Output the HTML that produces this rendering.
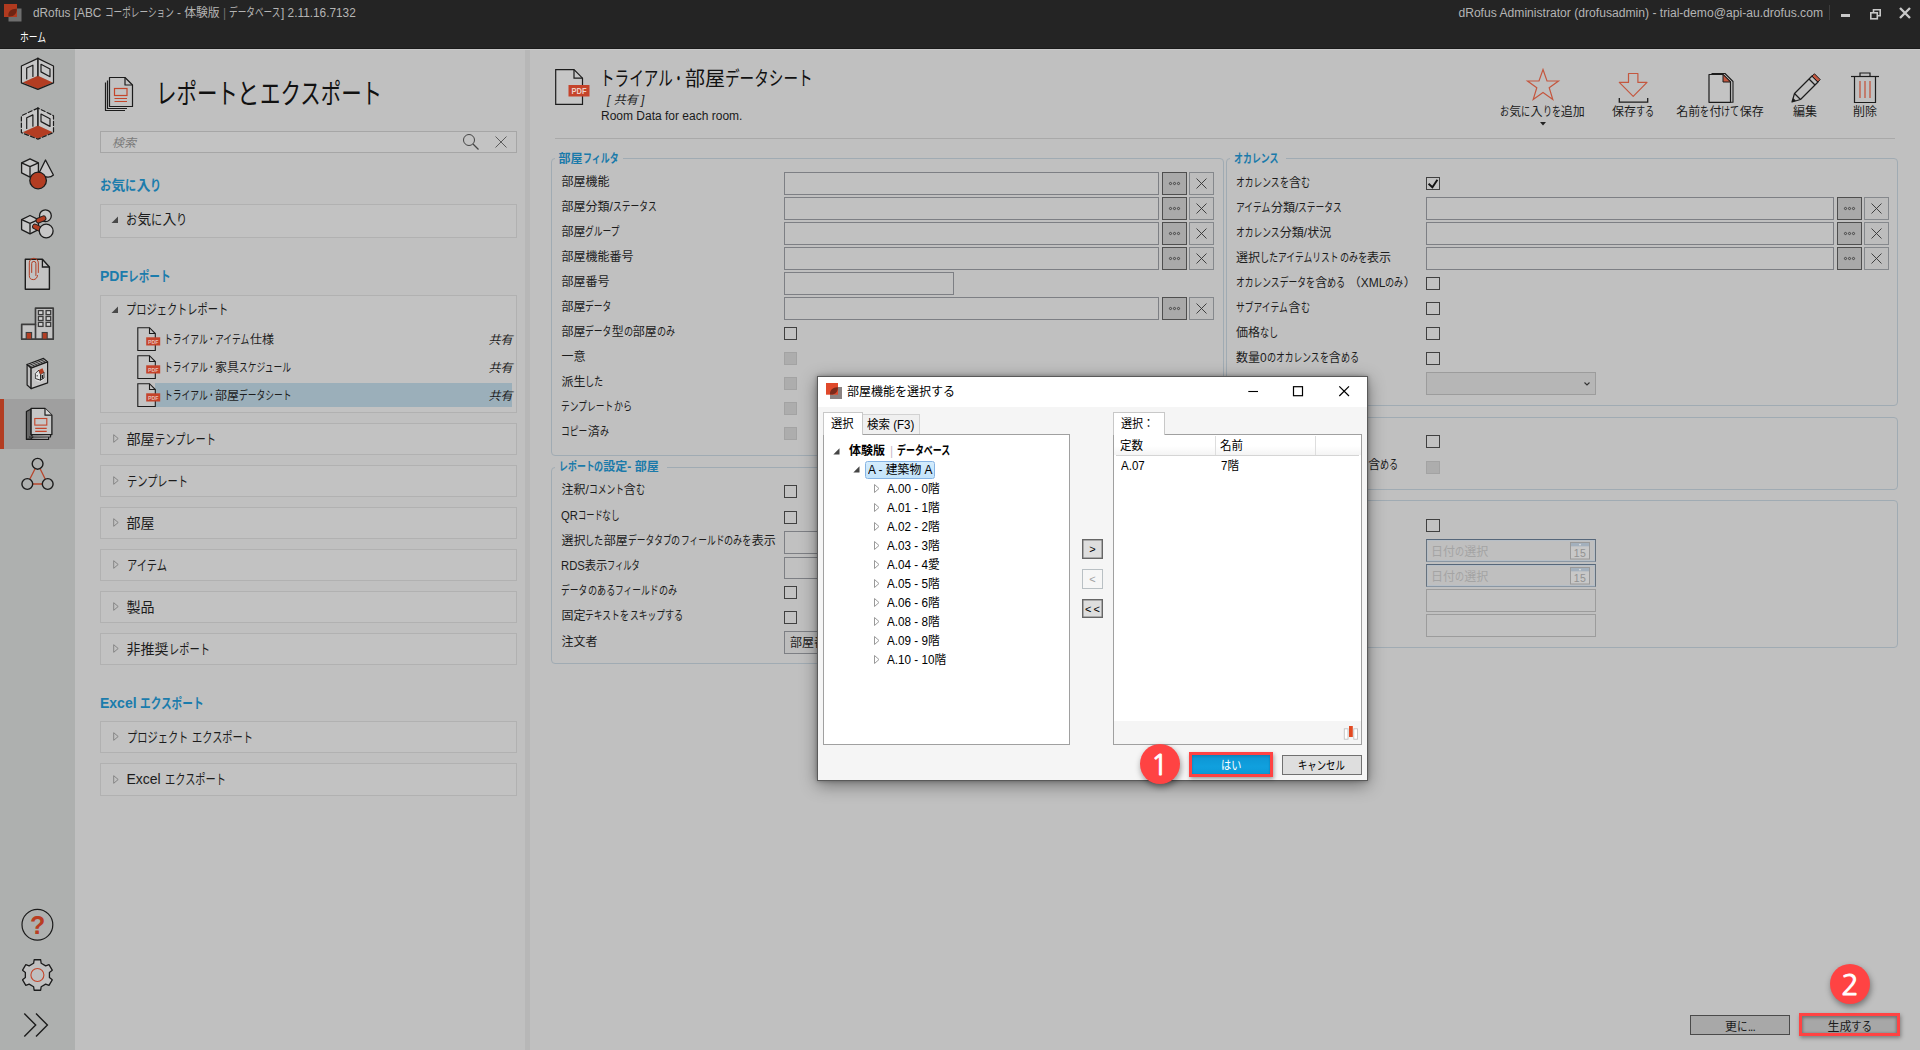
<!DOCTYPE html>
<html lang="ja"><head><meta charset="utf-8"><title>dRofus</title>
<style>
*{box-sizing:border-box;margin:0;padding:0}
html,body{width:1920px;height:1050px;overflow:hidden;background:#c0c0c0}
body{position:relative;font-family:"Liberation Sans","Noto Sans CJK JP",sans-serif;font-size:12px;color:#1a1a1a}
.t{position:absolute;white-space:nowrap}
.b{position:absolute}
.s{position:absolute;overflow:visible}
.k,.h{display:inline-block;transform-origin:0 50%;white-space:nowrap}
i,.i{font-style:italic}
</style></head>
<body>
<div class="b" style="left:0px;top:0px;width:1920px;height:48px;background:#242424"></div>
<div class="b" style="left:0px;top:48px;width:1920px;height:1px;background:#1a1a1a"></div>
<div class="b" style="left:0px;top:49px;width:1920px;height:1px;background:#c9c9c9"></div>
<svg class="s" style="left:4px;top:4px;" width="18" height="18" viewBox="0 0 18 18"><rect x="4.500" y="4.500" width="13" height="13" fill="#6e6e6e"/><rect x="0" y="0" width="13" height="13" fill="#b03a1f"/><path d="M4.500 12.500C3.500 7.500 7.500 4.500 12.800 4.800C13 9.500 10 13 4.500 12.500Z" fill="#6f2413"/></svg>
<div class="t" style="left:32.5px;top:3.5px;font-size:12px;line-height:18px;color:#b4b4b4;;transform:scaleX(0.985);transform-origin:left center">dRofus [ABC <span class="k" style="width:5.840em;transform:scaleX(0.730)">コーポレーション</span> - 体験版 <span style="color:#6e6e6e;font-weight:300">|</span> <span class="k" style="width:4.380em;transform:scaleX(0.730)">データベース</span>] 2.11.16.7132</div>
<div class="t" style="left:20px;top:28.5px;font-size:12px;line-height:18px;color:#ffffff;"><span class="k" style="width:2.190em;transform:scaleX(0.730)">ホーム</span></div>
<div class="t" style="right:97px;top:3.5px;font-size:12px;line-height:18px;color:#b4b4b4;;transform:scaleX(1.01);transform-origin:right center">dRofus Administrator (drofusadmin) - trial-demo@api-au.drofus.com</div>
<div class="b" style="left:1829px;top:5px;width:1px;height:15px;background:#3c3c3c"></div>
<svg class="s" style="left:1836px;top:4px;" width="80" height="20" viewBox="0 0 80 20"><rect x="5" y="10" width="9" height="3" fill="#c8c8c8"/><g fill="none" stroke="#c8c8c8" stroke-width="1.6"><rect x="34.800" y="8.800" width="6.500" height="6"/><path d="M37.500 8.500V5.800H44.200V11.800H41.500"/></g><path d="M64 4L74 14M74 4L64 14" stroke="#c8c8c8" stroke-width="2.4" fill="none"/></svg>
<div class="b" style="left:0px;top:49px;width:75px;height:1001px;background:#aeb0af"></div>
<div class="b" style="left:0px;top:49px;width:75px;height:1px;background:#b8bab9"></div>
<div class="b" style="left:0px;top:399px;width:75px;height:50px;background:#9f9f9f"></div>
<div class="b" style="left:0px;top:399px;width:4px;height:50px;background:#b33d22"></div>
<svg class="s" style="left:0;top:0" width="75" height="1050" viewBox="0 0 75 1050"><path d="M37.900 58.400L21.400 66V82.900L37.900 75.800Z M37.900 58.400L53.500 66V82.900L37.900 75.800Z" fill="#c7c7c7" stroke="none" transform="translate(0 0)"/><path d="M22.900 82.600L37.900 75.800L52.600 82.600L37.900 89.100Z" fill="#b33d22" transform="translate(0 0)"/><g stroke="#1c1c1c" stroke-width="1.2" fill="none" stroke-linejoin="round" stroke-linecap="round" transform="translate(0 0)"><path d="M37.900 58.400L21.400 66V82.900L37.900 89.400L53.500 82.900V66Z"/><path d="M37.900 58.400V75.800" stroke-width="1.600"/><path d="M26.700 78.800V68L32.900 65.200V76.500"/><path d="M41 64.300L50 69V76.700L41 71.900Z"/></g><path d="M37.900 58.400L21.400 66V82.900L37.900 75.800Z M37.900 58.400L53.500 66V82.900L37.900 75.800Z" fill="#c7c7c7" stroke="none" transform="translate(0 49.7)"/><path d="M22.900 82.600L37.900 75.800L52.600 82.600L37.900 89.100Z" fill="#b33d22" transform="translate(0 49.7)"/><g stroke="#1c1c1c" stroke-width="1.2" fill="none" stroke-linejoin="round" stroke-linecap="round" transform="translate(0 49.7)"><path d="M37.900 58.400L21.400 66V82.900L37.900 89.400L53.500 82.900V66Z" stroke-dasharray="4.200 2.200"/><path d="M37.900 58.400V75.800" stroke-width="1.600"/><path d="M26.700 78.800V68L32.900 65.200V76.500"/><path d="M41 64.300L50 69V76.700L41 71.900Z"/></g></svg>
<svg class="s" style="left:0;top:0" width="75" height="1050" viewBox="0 0 75 1050"><g transform="translate(20.5 157)"><path d="M9.500 1.800L1.100 5.900V15.900L9.500 20.100L17.900 15.900V5.900Z" fill="#c7c7c7" stroke="#1c1c1c" stroke-width="1.300" stroke-linejoin="round"/><path d="M1.100 5.900L9.500 9.700L17.900 5.900M9.500 9.700V20.100" fill="none" stroke="#1c1c1c" stroke-width="1.300" stroke-linejoin="round"/></g><path d="M45.500 160L39.300 172.500C42 177.500 50 178.500 53.400 175Z" fill="#c7c7c7" stroke="#1c1c1c" stroke-width="1.300" stroke-linejoin="round"/><circle cx="38.100" cy="180.500" r="8.300" fill="#b33d22" stroke="#1c1c1c" stroke-width="1.300"/></svg>
<svg class="s" style="left:0;top:0" width="75" height="1050" viewBox="0 0 75 1050"><circle cx="45.400" cy="215.700" r="5.900" fill="#c7c7c7" stroke="#1c1c1c" stroke-width="1.300"/><g transform="translate(20.5 213.7)"><path d="M9.500 1.800L1.100 5.900V15.900L9.500 20.100L17.900 15.900V5.900Z" fill="#c7c7c7" stroke="#1c1c1c" stroke-width="1.300" stroke-linejoin="round"/><path d="M1.100 5.900L9.500 9.700L17.900 5.900M9.500 9.700V20.100" fill="none" stroke="#1c1c1c" stroke-width="1.300" stroke-linejoin="round"/></g><path d="M38.500 220.500L43.500 218.300" stroke="#1c1c1c" stroke-width="5.800" stroke-linecap="round"/><path d="M38.500 220.500L43.500 218.300" stroke="#b33d22" stroke-width="4" stroke-linecap="round"/><path d="M35 226.500L41 229.500" stroke="#1c1c1c" stroke-width="5.800" stroke-linecap="round"/><path d="M35 226.500L41 229.500" stroke="#b33d22" stroke-width="4" stroke-linecap="round"/><circle cx="46.200" cy="231" r="6.900" fill="#c7c7c7" stroke="#1c1c1c" stroke-width="1.300"/></svg>
<svg class="s" style="left:0;top:0" width="75" height="1050" viewBox="0 0 75 1050"><path d="M25.300 259.300H42.400L49.400 267V289.200H25.300Z" fill="#c3c3c3" stroke="#1c1c1c" stroke-width="1.400" stroke-linejoin="round"/><path d="M42.400 259.300V267H49.400" fill="none" stroke="#1c1c1c" stroke-width="1.300"/><path d="M38.300 272.500V262.800A4.500 4.500 0 0 0 29.300 262.800V275.500A4.100 4.100 0 0 0 37.500 275.500" fill="none" stroke="#b33d22" stroke-width="1" stroke-linecap="round"/><path d="M37.500 275.500" fill="none"/><path d="M31.700 272.500V263.500A2.100 2.100 0 0 1 35.900 263.500V275.500" fill="none" stroke="#b33d22" stroke-width="1" stroke-linecap="round"/></svg>
<svg class="s" style="left:0;top:0" width="75" height="1050" viewBox="0 0 75 1050"><path d="M21.700 339.200V324.400H35.500V308.100H53.200V339.200Z" fill="#c3c3c3" stroke="#3c3c3c" stroke-width="1.700" stroke-linejoin="round"/><path d="M35.500 324.400V339.200" stroke="#3c3c3c" stroke-width="1.700"/><rect x="38.4" y="310.6" width="4.600" height="4" fill="#d2d2d2" stroke="#3c3c3c" stroke-width="1.300"/><rect x="38.4" y="316.5" width="4.600" height="4" fill="#d2d2d2" stroke="#3c3c3c" stroke-width="1.300"/><rect x="38.4" y="322.4" width="4.600" height="4" fill="#d2d2d2" stroke="#3c3c3c" stroke-width="1.300"/><rect x="46.1" y="310.6" width="4.600" height="4" fill="#d2d2d2" stroke="#3c3c3c" stroke-width="1.300"/><rect x="46.1" y="316.5" width="4.600" height="4" fill="#d2d2d2" stroke="#3c3c3c" stroke-width="1.300"/><rect x="46.1" y="322.4" width="4.600" height="4" fill="#d2d2d2" stroke="#3c3c3c" stroke-width="1.300"/><rect x="26.200" y="332.500" width="5.400" height="6.700" fill="#b33d22" stroke="#3c3c3c" stroke-width="1.100"/><rect x="42.200" y="332.500" width="5" height="6.700" fill="#b33d22" stroke="#3c3c3c" stroke-width="1.100"/></svg>
<svg class="s" style="left:0;top:0" width="75" height="1050" viewBox="0 0 75 1050"><g stroke="#1c1c1c" stroke-width="1.2" fill="none" stroke-linejoin="round" stroke-linecap="round"><path d="M27.100 364.500L43.500 358.400L47.600 361.900L31.100 368.100Z" fill="#d0d0d0"/><path d="M27.100 364.500V385L31.100 388.600V368.100Z" fill="#bcbcbc"/><path d="M31.100 368.100L47.600 361.900V382.900L31.100 388.600Z" fill="#c4c4c4"/><path d="M28.400 365.700L44.800 359.500M29.700 366.900L46.200 360.700" stroke-width="0.900"/></g><ellipse cx="39.500" cy="375.500" rx="5.800" ry="6.200" fill="#dedede"/><path d="M35.300 373.500L38.800 370L40.500 374.500V380.200L35.300 378.500Z" fill="#e4e4e4" stroke="#1c1c1c" stroke-width="0.900" stroke-linejoin="round"/><path d="M40.500 374.500L44 372V378L40.500 380.200Z" fill="#d4d4d4" stroke="#1c1c1c" stroke-width="0.900" stroke-linejoin="round"/><path d="M38.800 370L42.500 368.300L44 372L40.500 374.500Z" fill="#b33d22" stroke="none"/><rect x="41.600" y="375" width="1.400" height="3.600" fill="#1c1c1c"/><rect x="36.700" y="375.200" width="1" height="1.200" fill="#1c1c1c"/></svg>
<svg class="s" style="left:0;top:0" width="75" height="1050" viewBox="0 0 75 1050"><path d="M26.400 411.500L31.100 409V434.600L33 436.800L30.500 439.400H26.400Z" fill="#666" stroke="#1c1c1c" stroke-width="1.200" stroke-linejoin="round"/><path d="M27 439.400H48.600V437" fill="#c6c6c6" stroke="#1c1c1c" stroke-width="1.200" stroke-linejoin="round"/><path d="M29 437H50.500V434.600" fill="#c6c6c6" stroke="#1c1c1c" stroke-width="1.200" stroke-linejoin="round"/><path d="M31.100 408.400H45L51.900 415.200V434.600H31.100Z" fill="#c6c6c6" stroke="#1c1c1c" stroke-width="1.300" stroke-linejoin="round"/><path d="M45 408.400V415.200H51.900" fill="#d6d6d6" stroke="#1c1c1c" stroke-width="1.200" stroke-linejoin="round"/><g fill="none" stroke="#c4452a" stroke-width="1.100"><rect x="34.800" y="418.500" width="12" height="6.600"/><path d="M35.200 428.400H46.700M35.200 431.400H46.700"/></g></svg>
<svg class="s" style="left:0;top:0" width="75" height="1050" viewBox="0 0 75 1050"><path d="M37.600 463.800L27.300 484H47.700Z" fill="none" stroke="#b8462c" stroke-width="1.300"/><circle cx="37.6" cy="463.8" r="5.400" fill="#aeb0af" stroke="#1c1c1c" stroke-width="1.400"/><circle cx="27.3" cy="484" r="5.400" fill="#aeb0af" stroke="#1c1c1c" stroke-width="1.400"/><circle cx="47.7" cy="484" r="5.400" fill="#aeb0af" stroke="#1c1c1c" stroke-width="1.400"/></svg>
<svg class="s" style="left:0;top:0" width="75" height="1050" viewBox="0 0 75 1050"><circle cx="37.400" cy="924.700" r="15.400" fill="none" stroke="#1c1c1c" stroke-width="1.200"/><text x="37.600" y="934" text-anchor="middle" font-family="Liberation Sans, sans-serif" font-weight="bold" font-size="25" fill="#b93d22">?</text></svg>
<svg class="s" style="left:0;top:0" width="75" height="1050" viewBox="0 0 75 1050"><path d="M34.16 959.74L40.64 959.74L41.20 963.30L45.63 965.86L48.99 964.56L52.24 970.18L49.43 972.44L49.43 977.56L52.24 979.82L48.99 985.44L45.63 984.14L41.20 986.70L40.64 990.26L34.16 990.26L33.60 986.70L29.17 984.14L25.81 985.44L22.56 979.82L25.37 977.56L25.37 972.44L22.56 970.18L25.81 964.56L29.17 965.86L33.60 963.30Z" fill="#c0c0c0" stroke="#1c1c1c" stroke-width="1.300" stroke-linejoin="round"/><circle cx="37.400" cy="975" r="6.500" fill="none" stroke="#c4452a" stroke-width="1.100"/></svg>
<svg class="s" style="left:0;top:0" width="75" height="1050" viewBox="0 0 75 1050"><path d="M24.300 1013.600L35.700 1025L24.300 1036.600M36 1013.600L47.400 1025L36 1036.600" fill="none" stroke="#1c1c1c" stroke-width="1.400"/></svg>
<div class="b" style="left:525px;top:50px;width:5px;height:1000px;background:#b7b7b7"></div>
<svg class="s" style="left:104px;top:76px;" width="30" height="36" viewBox="0 0 30 36"><g fill="#c2c2c2" stroke="#1c1c1c" stroke-width="1.200" stroke-linejoin="round"><path d="M1.500 6.500V34.500H21"/><path d="M3.500 4.500V32.500H23" fill="none"/><path d="M5.500 1.500H21L28.500 9V30.500H5.500Z"/><path d="M21 1.500V9H28.500" fill="none"/></g><g fill="none" stroke="#c4462a" stroke-width="1.200"><rect x="10.500" y="12.500" width="12.500" height="7"/><path d="M10.500 22.500H23M10.500 25.500H23"/></g></svg>
<div class="t" style="left:155.5px;top:75px;font-size:28px;line-height:40px;color:#111;font-weight:400"><span class="k" style="width:2.920em;transform:scaleX(0.730)">レポート</span><span class="h" style="width:0.800em;transform:scaleX(0.800)">と</span><span class="k" style="width:4.380em;transform:scaleX(0.730)">エクスポート</span></div>
<div class="b" style="left:100px;top:131px;width:417px;height:22px;border:1px solid #a6a6a6;background:#c3c3c3"></div>
<div class="t" style="left:112px;top:133.5px;font-size:12px;line-height:18px;color:#7b7b7b;font-style:italic">検索</div>
<svg class="s" style="left:462px;top:133px;" width="18" height="18" viewBox="0 0 18 18"><circle cx="7" cy="7" r="5.500" fill="none" stroke="#454545" stroke-width="1"/><path d="M11 11L16.500 16.500" stroke="#454545" stroke-width="1.200"/></svg>
<svg class="s" style="left:495px;top:136px;" width="12" height="12" viewBox="0 0 12 12"><path d="M0.500 0.500L11.500 11.500M11.500 0.500L0.500 11.500" stroke="#505050" stroke-width="0.900"/></svg>
<div class="t" style="left:100px;top:175px;font-size:14px;line-height:21px;color:#1b7cac;font-weight:700"><span class="h" style="width:0.800em;transform:scaleX(0.800)">お</span>気<span class="h" style="width:0.800em;transform:scaleX(0.800)">に</span>入<span class="h" style="width:0.800em;transform:scaleX(0.800)">り</span></div>
<div class="b" style="left:100px;top:204px;width:417px;height:34px;border:1px solid #b1b1b1;background:#c2c2c2"></div>
<svg class="s" style="left:110.5px;top:216px;" width="8" height="8" viewBox="0 0 8 8"><path d="M7 0.500V7H0.500Z" fill="#484848"/></svg>
<div class="t" style="left:126px;top:208.8px;font-size:14px;line-height:21px;color:#1c1c1c;"><span class="h" style="width:0.800em;transform:scaleX(0.800)">お</span>気<span class="h" style="width:0.800em;transform:scaleX(0.800)">に</span>入<span class="h" style="width:0.800em;transform:scaleX(0.800)">り</span></div>
<div class="t" style="left:100px;top:265.5px;font-size:14px;line-height:21px;color:#1b7cac;font-weight:700"><b>PDF</b><span class="k" style="width:3.040em;transform:scaleX(0.760)">レポート</span></div>
<div class="b" style="left:100px;top:295px;width:417px;height:118px;border:1px solid #b1b1b1;background:#c2c2c2"></div>
<svg class="s" style="left:110.5px;top:306px;" width="8" height="8" viewBox="0 0 8 8"><path d="M7 0.500V7H0.500Z" fill="#484848"/></svg>
<div class="t" style="left:126px;top:298.5px;font-size:14px;line-height:21px;color:#1c1c1c;"><span class="k" style="width:7.300em;transform:scaleX(0.730)">プロジェクトレポート</span></div>
<div class="b" style="left:155px;top:383px;width:357px;height:24px;background:#9bafba"></div>
<svg class="s" style="left:137px;top:327px;" width="24" height="25" viewBox="0 0 24 25"><path d="M0.800 0.700H12.500L18.300 6.500V23.500H0.800Z" fill="#c4c4c4" stroke="#1c1c1c" stroke-width="1.100"/><path d="M12.500 0.700V6.500H18.300" fill="none" stroke="#1c1c1c" stroke-width="1.100"/><rect x="9.200" y="10.300" width="14" height="8.200" fill="#c5432a"/><text x="16.200" y="16.900" font-size="6.200" font-weight="bold" fill="#e6beb4" text-anchor="middle" font-family="Liberation Sans, sans-serif" textLength="10.500" lengthAdjust="spacingAndGlyphs">PDF</text></svg>
<div class="t" style="left:164px;top:330.5px;font-size:12px;line-height:18px;color:#1c1c1c;"><span class="k" style="width:3.650em;transform:scaleX(0.730)">トライアル</span><span class="k" style="width:0.500em;transform:scaleX(0.550);margin-left:0.020em;margin-right:0.080em">・</span><span class="k" style="width:2.920em;transform:scaleX(0.730)">アイテム</span>仕様</div>
<div class="t" style="right:1407.5px;top:330.5px;font-size:12px;line-height:18px;color:#1c1c1c;font-style:italic">共有</div>
<svg class="s" style="left:137px;top:355px;" width="24" height="25" viewBox="0 0 24 25"><path d="M0.800 0.700H12.500L18.300 6.500V23.500H0.800Z" fill="#c4c4c4" stroke="#1c1c1c" stroke-width="1.100"/><path d="M12.500 0.700V6.500H18.300" fill="none" stroke="#1c1c1c" stroke-width="1.100"/><rect x="9.200" y="10.300" width="14" height="8.200" fill="#c5432a"/><text x="16.200" y="16.900" font-size="6.200" font-weight="bold" fill="#e6beb4" text-anchor="middle" font-family="Liberation Sans, sans-serif" textLength="10.500" lengthAdjust="spacingAndGlyphs">PDF</text></svg>
<div class="t" style="left:164px;top:358.5px;font-size:12px;line-height:18px;color:#1c1c1c;"><span class="k" style="width:3.650em;transform:scaleX(0.730)">トライアル</span><span class="k" style="width:0.500em;transform:scaleX(0.550);margin-left:0.020em;margin-right:0.080em">・</span>家具<span class="k" style="width:4.380em;transform:scaleX(0.730)">スケジュール</span></div>
<div class="t" style="right:1407.5px;top:358.5px;font-size:12px;line-height:18px;color:#1c1c1c;font-style:italic">共有</div>
<svg class="s" style="left:137px;top:383px;" width="24" height="25" viewBox="0 0 24 25"><path d="M0.800 0.700H12.500L18.300 6.500V23.500H0.800Z" fill="#c4c4c4" stroke="#1c1c1c" stroke-width="1.100"/><path d="M12.500 0.700V6.500H18.300" fill="none" stroke="#1c1c1c" stroke-width="1.100"/><rect x="9.200" y="10.300" width="14" height="8.200" fill="#c5432a"/><text x="16.200" y="16.900" font-size="6.200" font-weight="bold" fill="#e6beb4" text-anchor="middle" font-family="Liberation Sans, sans-serif" textLength="10.500" lengthAdjust="spacingAndGlyphs">PDF</text></svg>
<div class="t" style="left:164px;top:386.5px;font-size:12px;line-height:18px;color:#1c1c1c;"><span class="k" style="width:3.650em;transform:scaleX(0.730)">トライアル</span><span class="k" style="width:0.500em;transform:scaleX(0.550);margin-left:0.020em;margin-right:0.080em">・</span>部屋<span class="k" style="width:4.380em;transform:scaleX(0.730)">データシート</span></div>
<div class="t" style="right:1407.5px;top:386.5px;font-size:12px;line-height:18px;color:#1c1c1c;font-style:italic">共有</div>
<div class="b" style="left:100px;top:423px;width:417px;height:32px;border:1px solid #b1b1b1;background:#c2c2c2"></div>
<svg class="s" style="left:113px;top:433.5px;" width="6" height="9" viewBox="0 0 6 9"><path d="M0.700 0.700L5.200 4.500L0.700 8.300Z" fill="none" stroke="#858585" stroke-width="1"/></svg>
<div class="t" style="left:126.5px;top:428.5px;font-size:14px;line-height:21px;color:#1c1c1c;">部屋<span class="k" style="width:4.380em;transform:scaleX(0.730)">テンプレート</span></div>
<div class="b" style="left:100px;top:465px;width:417px;height:32px;border:1px solid #b1b1b1;background:#c2c2c2"></div>
<svg class="s" style="left:113px;top:475.5px;" width="6" height="9" viewBox="0 0 6 9"><path d="M0.700 0.700L5.200 4.500L0.700 8.300Z" fill="none" stroke="#858585" stroke-width="1"/></svg>
<div class="t" style="left:126.5px;top:470.5px;font-size:14px;line-height:21px;color:#1c1c1c;"><span class="k" style="width:4.380em;transform:scaleX(0.730)">テンプレート</span></div>
<div class="b" style="left:100px;top:507px;width:417px;height:32px;border:1px solid #b1b1b1;background:#c2c2c2"></div>
<svg class="s" style="left:113px;top:517.5px;" width="6" height="9" viewBox="0 0 6 9"><path d="M0.700 0.700L5.200 4.500L0.700 8.300Z" fill="none" stroke="#858585" stroke-width="1"/></svg>
<div class="t" style="left:126.5px;top:512.5px;font-size:14px;line-height:21px;color:#1c1c1c;">部屋</div>
<div class="b" style="left:100px;top:549px;width:417px;height:32px;border:1px solid #b1b1b1;background:#c2c2c2"></div>
<svg class="s" style="left:113px;top:559.5px;" width="6" height="9" viewBox="0 0 6 9"><path d="M0.700 0.700L5.200 4.500L0.700 8.300Z" fill="none" stroke="#858585" stroke-width="1"/></svg>
<div class="t" style="left:126.5px;top:554.5px;font-size:14px;line-height:21px;color:#1c1c1c;"><span class="k" style="width:2.920em;transform:scaleX(0.730)">アイテム</span></div>
<div class="b" style="left:100px;top:591px;width:417px;height:32px;border:1px solid #b1b1b1;background:#c2c2c2"></div>
<svg class="s" style="left:113px;top:601.5px;" width="6" height="9" viewBox="0 0 6 9"><path d="M0.700 0.700L5.200 4.500L0.700 8.300Z" fill="none" stroke="#858585" stroke-width="1"/></svg>
<div class="t" style="left:126.5px;top:596.5px;font-size:14px;line-height:21px;color:#1c1c1c;">製品</div>
<div class="b" style="left:100px;top:633px;width:417px;height:32px;border:1px solid #b1b1b1;background:#c2c2c2"></div>
<svg class="s" style="left:113px;top:643.5px;" width="6" height="9" viewBox="0 0 6 9"><path d="M0.700 0.700L5.200 4.500L0.700 8.300Z" fill="none" stroke="#858585" stroke-width="1"/></svg>
<div class="t" style="left:126.5px;top:638.5px;font-size:14px;line-height:21px;color:#1c1c1c;">非推奨<span class="k" style="width:2.920em;transform:scaleX(0.730)">レポート</span></div>
<div class="t" style="left:100px;top:693px;font-size:14px;line-height:21px;color:#1b7cac;font-weight:700"><b>Excel</b> <span class="k" style="width:4.560em;transform:scaleX(0.760)">エクスポート</span></div>
<div class="b" style="left:100px;top:721px;width:417px;height:32px;border:1px solid #b1b1b1;background:#c2c2c2"></div>
<svg class="s" style="left:113px;top:732px;" width="6" height="9" viewBox="0 0 6 9"><path d="M0.700 0.700L5.200 4.500L0.700 8.300Z" fill="none" stroke="#858585" stroke-width="1"/></svg>
<div class="t" style="left:126.5px;top:726.5px;font-size:14px;line-height:21px;color:#1c1c1c;"><span class="k" style="width:4.380em;transform:scaleX(0.730)">プロジェクト</span> <span class="k" style="width:4.380em;transform:scaleX(0.730)">エクスポート</span></div>
<div class="b" style="left:100px;top:763px;width:417px;height:33px;border:1px solid #b1b1b1;background:#c2c2c2"></div>
<svg class="s" style="left:113px;top:774.5px;" width="6" height="9" viewBox="0 0 6 9"><path d="M0.700 0.700L5.200 4.500L0.700 8.300Z" fill="none" stroke="#858585" stroke-width="1"/></svg>
<div class="t" style="left:126.5px;top:769px;font-size:14px;line-height:21px;color:#1c1c1c;">Excel <span class="k" style="width:4.380em;transform:scaleX(0.730)">エクスポート</span></div>
<svg class="s" style="left:554px;top:68px;" width="38" height="38" viewBox="0 0 38 38"><path d="M1.700 1.700H20L28.500 10.200V36.300H1.700Z" fill="#c6c6c6" stroke="#1c1c1c" stroke-width="1.200"/><path d="M20 1.700V10.200H28.500" fill="none" stroke="#1c1c1c" stroke-width="1.200"/><rect x="14.500" y="17" width="21" height="11.500" fill="#c5432a"/><text x="25" y="26.300" font-size="9" font-weight="bold" fill="#ecd0c8" text-anchor="middle" font-family="Liberation Sans, sans-serif" textLength="15" lengthAdjust="spacingAndGlyphs">PDF</text></svg>
<div class="t" style="left:600px;top:64.5px;font-size:20px;line-height:28px;color:#111;"><span class="k" style="width:3.650em;transform:scaleX(0.730)">トライアル</span><span class="k" style="width:0.500em;transform:scaleX(0.550);margin-left:0.020em;margin-right:0.080em">・</span>部屋<span class="k" style="width:4.380em;transform:scaleX(0.730)">データシート</span></div>
<div class="t" style="left:607px;top:90.5px;font-size:12px;line-height:18px;color:#222;font-style:italic">[ 共有 ]</div>
<div class="t" style="left:601px;top:106.5px;font-size:12px;line-height:18px;color:#1a1a1a;">Room Data for each room.</div>
<div class="b" style="left:555px;top:138px;width:1340px;height:1px;background:#a9a9a9"></div>
<svg class="s" style="left:1526px;top:68px;" width="34" height="34" viewBox="0 0 34 34"><path d="M17 1.500L21 13H32.500L23.200 19.800L26.800 31.500L17 24.500L7.200 31.500L10.800 19.800L1.500 13H13Z" fill="none" stroke="#c4573f" stroke-width="1.200" stroke-linejoin="miter"/></svg>
<div class="t" style="left:1342.5px;width:400px;text-align:center;top:103px;font-size:12px;line-height:18px;color:#1c1c1c;"><span class="h" style="width:0.760em;transform:scaleX(0.760)">お</span>気<span class="h" style="width:0.760em;transform:scaleX(0.760)">に</span>入<span class="h" style="width:1.520em;transform:scaleX(0.760)">りを</span>追加</div>
<svg class="s" style="left:1540px;top:122px;" width="6" height="4" viewBox="0 0 6 4"><path d="M0 0H6L3 3.500Z" fill="#222"/></svg>
<svg class="s" style="left:1618px;top:72px;" width="31" height="32" viewBox="0 0 31 32"><path d="M10.500 1.500H19.900V10.400H29L15.200 24.300L1.300 10.400H10.500Z" fill="none" stroke="#c4573f" stroke-width="1.200" stroke-linejoin="round"/><path d="M1.300 26V30.100H29.700V26" fill="none" stroke="#1c1c1c" stroke-width="1.300"/></svg>
<div class="t" style="left:1433px;width:400px;text-align:center;top:103px;font-size:12px;line-height:18px;color:#1c1c1c;">保存<span class="h" style="width:1.520em;transform:scaleX(0.760)">する</span></div>
<svg class="s" style="left:1707px;top:72px;" width="28" height="32" viewBox="0 0 28 32"><path d="M4.500 1.500H18L26 9.500V30.300H23.500" fill="#c3c3c3" stroke="#1c1c1c" stroke-width="1.100" stroke-linejoin="round"/><path d="M2 2.500H16L23.500 10V30.300H2Z" fill="#c3c3c3" stroke="#1c1c1c" stroke-width="1.200" stroke-linejoin="round"/><path d="M16 2.500L23.500 10H16Z" fill="#c4573f" stroke="#1c1c1c" stroke-width="1"/></svg>
<div class="t" style="left:1520px;width:400px;text-align:center;top:103px;font-size:12px;line-height:18px;color:#1c1c1c;">名前<span class="h" style="width:0.760em;transform:scaleX(0.760)">を</span>付<span class="h" style="width:1.520em;transform:scaleX(0.760)">けて</span>保存</div>
<svg class="s" style="left:1790px;top:72px;" width="32" height="32" viewBox="0 0 32 32"><g fill="none" stroke="#1c1c1c" stroke-width="1.200" stroke-linejoin="round"><path d="M2 30L4.500 21.500L22 4L28 10L10.500 27.500Z"/><path d="M4.500 21.500L10.500 27.500"/><path d="M19 7L25 13"/></g><path d="M22 4L24.500 1.800L30.200 7.500L28 10Z" fill="#c4573f" stroke="#1c1c1c" stroke-width="1"/><path d="M2 30L3.200 26L6 28.800Z" fill="#1c1c1c"/></svg>
<div class="t" style="left:1605px;width:400px;text-align:center;top:103px;font-size:12px;line-height:18px;color:#1c1c1c;">編集</div>
<svg class="s" style="left:1850px;top:71px;" width="30" height="33" viewBox="0 0 30 33"><g fill="none" stroke="#1c1c1c" stroke-width="1.200"><path d="M1 5.500H29"/><path d="M10 5.500V2H20V5.500"/><path d="M4.500 5.500V31.500H25.500V5.500"/></g><path d="M10 10V27M15 10V27M20 10V27" stroke="#c4573f" stroke-width="1.300"/></svg>
<div class="t" style="left:1665px;width:400px;text-align:center;top:103px;font-size:12px;line-height:18px;color:#1c1c1c;">削除</div>
<div class="b" style="left:551px;top:158px;width:673px;height:298px;border:1px solid #a0abb3;border-radius:4px"></div>
<div class="b" style="left:555px;top:156px;width:68px;height:5px;background:#c0c0c0"></div>
<div class="t" style="left:558.5px;top:149.5px;font-size:12px;line-height:18px;color:#1a7aaa;font-weight:700">部屋<span class="k" style="width:2.980em;transform:scaleX(0.745)">フィルタ</span></div>
<div class="t" style="left:561.4px;top:173.4px;font-size:12px;line-height:18px;color:#1c1c1c;">部屋機能</div>
<div class="t" style="left:561.4px;top:198.4px;font-size:12px;line-height:18px;color:#1c1c1c;">部屋分類/<span class="k" style="width:3.650em;transform:scaleX(0.730)">ステータス</span></div>
<div class="t" style="left:561.4px;top:223.4px;font-size:12px;line-height:18px;color:#1c1c1c;">部屋<span class="k" style="width:2.920em;transform:scaleX(0.730)">グループ</span></div>
<div class="t" style="left:561.4px;top:248.4px;font-size:12px;line-height:18px;color:#1c1c1c;">部屋機能番号</div>
<div class="t" style="left:561.4px;top:273.4px;font-size:12px;line-height:18px;color:#1c1c1c;">部屋番号</div>
<div class="t" style="left:561.4px;top:298.4px;font-size:12px;line-height:18px;color:#1c1c1c;">部屋<span class="k" style="width:2.190em;transform:scaleX(0.730)">データ</span></div>
<div class="t" style="left:561.4px;top:323.4px;font-size:12px;line-height:18px;color:#1c1c1c;">部屋<span class="k" style="width:2.190em;transform:scaleX(0.730)">データ</span>型<span class="h" style="width:0.760em;transform:scaleX(0.760)">の</span>部屋<span class="h" style="width:1.520em;transform:scaleX(0.760)">のみ</span></div>
<div class="t" style="left:561.4px;top:348.4px;font-size:12px;line-height:18px;color:#1c1c1c;">一意</div>
<div class="t" style="left:561.4px;top:373.4px;font-size:12px;line-height:18px;color:#1c1c1c;">派生<span class="h" style="width:1.520em;transform:scaleX(0.760)">した</span></div>
<div class="t" style="left:561.4px;top:398.4px;font-size:12px;line-height:18px;color:#1c1c1c;"><span class="k" style="width:4.380em;transform:scaleX(0.730)">テンプレート</span><span class="h" style="width:1.520em;transform:scaleX(0.760)">から</span></div>
<div class="t" style="left:561.4px;top:423.4px;font-size:12px;line-height:18px;color:#1c1c1c;"><span class="k" style="width:2.190em;transform:scaleX(0.730)">コピー</span>済<span class="h" style="width:0.760em;transform:scaleX(0.760)">み</span></div>
<div class="b" style="left:784px;top:172px;width:375px;height:23px;border:1px solid #7d7f84;background:#c1c1c1;"></div>
<div class="b" style="left:1162px;top:172px;width:25px;height:23px;border:1px solid #4e4e4e;background:#a9a9a9"></div>
<svg class="s" style="left:1169px;top:182px;" width="11" height="3" viewBox="0 0 11 3"><g fill="none" stroke="#333" stroke-width="0.800"><circle cx="1.500" cy="1.500" r="1.100"/><circle cx="5.500" cy="1.500" r="1.100"/><circle cx="9.500" cy="1.500" r="1.100"/></g></svg>
<div class="b" style="left:1189px;top:172px;width:25px;height:23px;border:1px solid #85888c;background:#bdbdbd"></div>
<svg class="s" style="left:1196px;top:178px;" width="11" height="11" viewBox="0 0 11 11"><path d="M0.500 0.500L10.500 10.500M10.500 0.500L0.500 10.500" stroke="#333" stroke-width="0.900"/></svg>
<div class="b" style="left:784px;top:197px;width:375px;height:23px;border:1px solid #7d7f84;background:#c1c1c1;"></div>
<div class="b" style="left:1162px;top:197px;width:25px;height:23px;border:1px solid #4e4e4e;background:#a9a9a9"></div>
<svg class="s" style="left:1169px;top:207px;" width="11" height="3" viewBox="0 0 11 3"><g fill="none" stroke="#333" stroke-width="0.800"><circle cx="1.500" cy="1.500" r="1.100"/><circle cx="5.500" cy="1.500" r="1.100"/><circle cx="9.500" cy="1.500" r="1.100"/></g></svg>
<div class="b" style="left:1189px;top:197px;width:25px;height:23px;border:1px solid #85888c;background:#bdbdbd"></div>
<svg class="s" style="left:1196px;top:203px;" width="11" height="11" viewBox="0 0 11 11"><path d="M0.500 0.500L10.500 10.500M10.500 0.500L0.500 10.500" stroke="#333" stroke-width="0.900"/></svg>
<div class="b" style="left:784px;top:222px;width:375px;height:23px;border:1px solid #7d7f84;background:#c1c1c1;"></div>
<div class="b" style="left:1162px;top:222px;width:25px;height:23px;border:1px solid #4e4e4e;background:#a9a9a9"></div>
<svg class="s" style="left:1169px;top:232px;" width="11" height="3" viewBox="0 0 11 3"><g fill="none" stroke="#333" stroke-width="0.800"><circle cx="1.500" cy="1.500" r="1.100"/><circle cx="5.500" cy="1.500" r="1.100"/><circle cx="9.500" cy="1.500" r="1.100"/></g></svg>
<div class="b" style="left:1189px;top:222px;width:25px;height:23px;border:1px solid #85888c;background:#bdbdbd"></div>
<svg class="s" style="left:1196px;top:228px;" width="11" height="11" viewBox="0 0 11 11"><path d="M0.500 0.500L10.500 10.500M10.500 0.500L0.500 10.500" stroke="#333" stroke-width="0.900"/></svg>
<div class="b" style="left:784px;top:247px;width:375px;height:23px;border:1px solid #7d7f84;background:#c1c1c1;"></div>
<div class="b" style="left:1162px;top:247px;width:25px;height:23px;border:1px solid #4e4e4e;background:#a9a9a9"></div>
<svg class="s" style="left:1169px;top:257px;" width="11" height="3" viewBox="0 0 11 3"><g fill="none" stroke="#333" stroke-width="0.800"><circle cx="1.500" cy="1.500" r="1.100"/><circle cx="5.500" cy="1.500" r="1.100"/><circle cx="9.500" cy="1.500" r="1.100"/></g></svg>
<div class="b" style="left:1189px;top:247px;width:25px;height:23px;border:1px solid #85888c;background:#bdbdbd"></div>
<svg class="s" style="left:1196px;top:253px;" width="11" height="11" viewBox="0 0 11 11"><path d="M0.500 0.500L10.500 10.500M10.500 0.500L0.500 10.500" stroke="#333" stroke-width="0.900"/></svg>
<div class="b" style="left:784px;top:297px;width:375px;height:23px;border:1px solid #7d7f84;background:#c1c1c1;"></div>
<div class="b" style="left:1162px;top:297px;width:25px;height:23px;border:1px solid #4e4e4e;background:#a9a9a9"></div>
<svg class="s" style="left:1169px;top:307px;" width="11" height="3" viewBox="0 0 11 3"><g fill="none" stroke="#333" stroke-width="0.800"><circle cx="1.500" cy="1.500" r="1.100"/><circle cx="5.500" cy="1.500" r="1.100"/><circle cx="9.500" cy="1.500" r="1.100"/></g></svg>
<div class="b" style="left:1189px;top:297px;width:25px;height:23px;border:1px solid #85888c;background:#bdbdbd"></div>
<svg class="s" style="left:1196px;top:303px;" width="11" height="11" viewBox="0 0 11 11"><path d="M0.500 0.500L10.500 10.500M10.500 0.500L0.500 10.500" stroke="#333" stroke-width="0.900"/></svg>
<div class="b" style="left:784px;top:272px;width:170px;height:23px;border:1px solid #7d7f84;background:#c1c1c1;"></div>
<div class="b" style="left:784px;top:327px;width:13px;height:13px;border:1px solid #404040;background:#c2c2c2"></div>
<div class="b" style="left:784px;top:352px;width:13px;height:13px;border:1px solid #a3a3a3;background:#adadad"></div>
<div class="b" style="left:784px;top:377px;width:13px;height:13px;border:1px solid #a3a3a3;background:#adadad"></div>
<div class="b" style="left:784px;top:402px;width:13px;height:13px;border:1px solid #a3a3a3;background:#adadad"></div>
<div class="b" style="left:784px;top:427px;width:13px;height:13px;border:1px solid #a3a3a3;background:#adadad"></div>
<div class="b" style="left:551px;top:466.5px;width:673px;height:197.5px;border:1px solid #a0abb3;border-radius:4px"></div>
<div class="b" style="left:555px;top:464.5px;width:112px;height:5px;background:#c0c0c0"></div>
<div class="t" style="left:558.5px;top:458px;font-size:12px;line-height:18px;color:#1a7aaa;font-weight:700"><span class="k" style="width:2.980em;transform:scaleX(0.745)">レポート</span><span class="h" style="width:0.760em;transform:scaleX(0.760)">の</span>設定- 部屋</div>
<div class="t" style="left:561.4px;top:481.3px;font-size:12px;line-height:18px;color:#1c1c1c;">注釈/<span class="k" style="width:2.920em;transform:scaleX(0.730)">コメント</span>含<span class="h" style="width:0.760em;transform:scaleX(0.760)">む</span></div>
<div class="t" style="left:561.4px;top:506.5px;font-size:12px;line-height:18px;color:#1c1c1c;;transform:scaleX(0.94);transform-origin:left center">QR<span class="k" style="width:2.190em;transform:scaleX(0.730)">コード</span><span class="h" style="width:1.520em;transform:scaleX(0.760)">なし</span></div>
<div class="t" style="left:561.4px;top:531.7px;font-size:12px;line-height:18px;color:#1c1c1c;">選択<span class="h" style="width:1.520em;transform:scaleX(0.760)">した</span>部屋<span class="k" style="width:3.650em;transform:scaleX(0.730)">データタブ</span><span class="h" style="width:0.760em;transform:scaleX(0.760)">の</span><span class="k" style="width:3.650em;transform:scaleX(0.730)">フィールド</span><span class="h" style="width:2.280em;transform:scaleX(0.760)">のみを</span>表示</div>
<div class="t" style="left:561.4px;top:556.9px;font-size:12px;line-height:18px;color:#1c1c1c;;transform:scaleX(0.94);transform-origin:left center">RDS表示<span class="k" style="width:2.920em;transform:scaleX(0.730)">フィルタ</span></div>
<div class="t" style="left:561.4px;top:582.1px;font-size:12px;line-height:18px;color:#1c1c1c;"><span class="k" style="width:2.190em;transform:scaleX(0.730)">データ</span><span class="h" style="width:2.280em;transform:scaleX(0.760)">のある</span><span class="k" style="width:3.650em;transform:scaleX(0.730)">フィールド</span><span class="h" style="width:1.520em;transform:scaleX(0.760)">のみ</span></div>
<div class="t" style="left:561.4px;top:607.3px;font-size:12px;line-height:18px;color:#1c1c1c;">固定<span class="k" style="width:2.920em;transform:scaleX(0.730)">テキスト</span><span class="h" style="width:0.760em;transform:scaleX(0.760)">を</span><span class="k" style="width:2.920em;transform:scaleX(0.730)">スキップ</span><span class="h" style="width:1.520em;transform:scaleX(0.760)">する</span></div>
<div class="t" style="left:561.4px;top:632.5px;font-size:12px;line-height:18px;color:#1c1c1c;">注文者</div>
<div class="b" style="left:784px;top:485px;width:13px;height:13px;border:1px solid #404040;background:#c2c2c2"></div>
<div class="b" style="left:784px;top:511px;width:13px;height:13px;border:1px solid #404040;background:#c2c2c2"></div>
<div class="b" style="left:784px;top:531px;width:375px;height:23px;border:1px solid #7d7f84;background:#c1c1c1;"></div>
<div class="b" style="left:784px;top:556.5px;width:375px;height:22.5px;border:1px solid #7d7f84;background:#c1c1c1;"></div>
<div class="b" style="left:784px;top:586px;width:13px;height:13px;border:1px solid #404040;background:#c2c2c2"></div>
<div class="b" style="left:784px;top:611px;width:13px;height:13px;border:1px solid #404040;background:#c2c2c2"></div>
<div class="b" style="left:784px;top:631px;width:170px;height:23px;border:1px solid #7d7f84;background:#c1c1c1;background:#bdbdbd"></div>
<div class="t" style="left:790px;top:633.5px;font-size:12px;line-height:18px;color:#1c1c1c;">部屋番号</div>
<div class="b" style="left:1226px;top:158px;width:672px;height:248px;border:1px solid #a0abb3;border-radius:4px"></div>
<div class="b" style="left:1230px;top:156px;width:56px;height:5px;background:#c0c0c0"></div>
<div class="t" style="left:1233.5px;top:149.5px;font-size:12px;line-height:18px;color:#1a7aaa;font-weight:700"><span class="k" style="width:3.725em;transform:scaleX(0.745)">オカレンス</span></div>
<div class="t" style="left:1236px;top:173.8px;font-size:12px;line-height:18px;color:#1c1c1c;"><span class="k" style="width:3.650em;transform:scaleX(0.730)">オカレンス</span><span class="h" style="width:0.760em;transform:scaleX(0.760)">を</span>含<span class="h" style="width:0.760em;transform:scaleX(0.760)">む</span></div>
<div class="t" style="left:1236px;top:198.8px;font-size:12px;line-height:18px;color:#1c1c1c;"><span class="k" style="width:2.920em;transform:scaleX(0.730)">アイテム</span>分類/<span class="k" style="width:3.650em;transform:scaleX(0.730)">ステータス</span></div>
<div class="t" style="left:1236px;top:223.8px;font-size:12px;line-height:18px;color:#1c1c1c;"><span class="k" style="width:3.650em;transform:scaleX(0.730)">オカレンス</span>分類/状況</div>
<div class="t" style="left:1236px;top:248.8px;font-size:12px;line-height:18px;color:#1c1c1c;">選択<span class="h" style="width:1.520em;transform:scaleX(0.760)">した</span><span class="k" style="width:5.110em;transform:scaleX(0.730)">アイテムリスト</span><span class="h" style="width:2.280em;transform:scaleX(0.760)">のみを</span>表示</div>
<div class="t" style="left:1236px;top:273.8px;font-size:12px;line-height:18px;color:#1c1c1c;"><span class="k" style="width:5.840em;transform:scaleX(0.730)">オカレンスデータ</span><span class="h" style="width:0.760em;transform:scaleX(0.760)">を</span>含<span class="h" style="width:1.520em;transform:scaleX(0.760)">める</span> （XML<span class="h" style="width:1.520em;transform:scaleX(0.760)">のみ</span>）</div>
<div class="t" style="left:1236px;top:298.8px;font-size:12px;line-height:18px;color:#1c1c1c;"><span class="k" style="width:4.380em;transform:scaleX(0.730)">サブアイテム</span>含<span class="h" style="width:0.760em;transform:scaleX(0.760)">む</span></div>
<div class="t" style="left:1236px;top:323.8px;font-size:12px;line-height:18px;color:#1c1c1c;">価格<span class="h" style="width:1.520em;transform:scaleX(0.760)">なし</span></div>
<div class="t" style="left:1236px;top:348.8px;font-size:12px;line-height:18px;color:#1c1c1c;">数量0<span class="h" style="width:0.760em;transform:scaleX(0.760)">の</span><span class="k" style="width:3.650em;transform:scaleX(0.730)">オカレンス</span><span class="h" style="width:0.760em;transform:scaleX(0.760)">を</span>含<span class="h" style="width:1.520em;transform:scaleX(0.760)">める</span></div>
<div class="b" style="left:1426px;top:177px;width:14px;height:13px;border:1px solid #404040;background:#c2c2c2"></div>
<svg class="s" style="left:1426px;top:177px;" width="14" height="13" viewBox="0 0 14 13"><path d="M2.600 6.700L6.400 10.300L11.400 2.700" fill="none" stroke="#111" stroke-width="1.900"/></svg>
<div class="b" style="left:1426px;top:197px;width:408px;height:23px;border:1px solid #7d7f84;background:#c1c1c1;"></div>
<div class="b" style="left:1837px;top:197px;width:25px;height:23px;border:1px solid #4e4e4e;background:#a9a9a9"></div>
<svg class="s" style="left:1844px;top:207px;" width="11" height="3" viewBox="0 0 11 3"><g fill="none" stroke="#333" stroke-width="0.800"><circle cx="1.500" cy="1.500" r="1.100"/><circle cx="5.500" cy="1.500" r="1.100"/><circle cx="9.500" cy="1.500" r="1.100"/></g></svg>
<div class="b" style="left:1864px;top:197px;width:25px;height:23px;border:1px solid #85888c;background:#bdbdbd"></div>
<svg class="s" style="left:1871px;top:203px;" width="11" height="11" viewBox="0 0 11 11"><path d="M0.500 0.500L10.500 10.500M10.500 0.500L0.500 10.500" stroke="#333" stroke-width="0.900"/></svg>
<div class="b" style="left:1426px;top:222px;width:408px;height:23px;border:1px solid #7d7f84;background:#c1c1c1;"></div>
<div class="b" style="left:1837px;top:222px;width:25px;height:23px;border:1px solid #4e4e4e;background:#a9a9a9"></div>
<svg class="s" style="left:1844px;top:232px;" width="11" height="3" viewBox="0 0 11 3"><g fill="none" stroke="#333" stroke-width="0.800"><circle cx="1.500" cy="1.500" r="1.100"/><circle cx="5.500" cy="1.500" r="1.100"/><circle cx="9.500" cy="1.500" r="1.100"/></g></svg>
<div class="b" style="left:1864px;top:222px;width:25px;height:23px;border:1px solid #85888c;background:#bdbdbd"></div>
<svg class="s" style="left:1871px;top:228px;" width="11" height="11" viewBox="0 0 11 11"><path d="M0.500 0.500L10.500 10.500M10.500 0.500L0.500 10.500" stroke="#333" stroke-width="0.900"/></svg>
<div class="b" style="left:1426px;top:247px;width:408px;height:23px;border:1px solid #7d7f84;background:#c1c1c1;"></div>
<div class="b" style="left:1837px;top:247px;width:25px;height:23px;border:1px solid #4e4e4e;background:#a9a9a9"></div>
<svg class="s" style="left:1844px;top:257px;" width="11" height="3" viewBox="0 0 11 3"><g fill="none" stroke="#333" stroke-width="0.800"><circle cx="1.500" cy="1.500" r="1.100"/><circle cx="5.500" cy="1.500" r="1.100"/><circle cx="9.500" cy="1.500" r="1.100"/></g></svg>
<div class="b" style="left:1864px;top:247px;width:25px;height:23px;border:1px solid #85888c;background:#bdbdbd"></div>
<svg class="s" style="left:1871px;top:253px;" width="11" height="11" viewBox="0 0 11 11"><path d="M0.500 0.500L10.500 10.500M10.500 0.500L0.500 10.500" stroke="#333" stroke-width="0.900"/></svg>
<div class="b" style="left:1426px;top:277px;width:14px;height:13px;border:1px solid #404040;background:#c2c2c2"></div>
<div class="b" style="left:1426px;top:302px;width:14px;height:13px;border:1px solid #404040;background:#c2c2c2"></div>
<div class="b" style="left:1426px;top:327px;width:14px;height:13px;border:1px solid #404040;background:#c2c2c2"></div>
<div class="b" style="left:1426px;top:352px;width:14px;height:13px;border:1px solid #404040;background:#c2c2c2"></div>
<div class="t" style="left:1236px;top:373.8px;font-size:12px;line-height:18px;color:#1c1c1c;"><span class="k" style="width:2.190em;transform:scaleX(0.730)">ソート</span></div>
<div class="b" style="left:1426px;top:372px;width:170px;height:23px;border:1px solid #7d7f84;background:#c1c1c1;background:#b6b6b6;border-color:#9c9c9c"></div>
<svg class="s" style="left:1583.5px;top:381.5px;" width="6" height="4" viewBox="0 0 6 4"><path d="M0.500 0.500L3 3L5.500 0.500" fill="none" stroke="#333" stroke-width="1.100"/></svg>
<div class="b" style="left:1226px;top:417px;width:672px;height:73px;border:1px solid #a0abb3;border-radius:4px"></div>
<div class="b" style="left:1426px;top:435px;width:14px;height:13px;border:1px solid #404040;background:#c2c2c2"></div>
<div class="b" style="left:1426px;top:461px;width:14px;height:13px;border:1px solid #a3a3a3;background:#adadad"></div>
<div class="t" style="left:1236px;top:432.5px;font-size:12px;line-height:18px;color:#1c1c1c;">価格<span class="h" style="width:0.760em;transform:scaleX(0.760)">を</span>含<span class="h" style="width:1.520em;transform:scaleX(0.760)">める</span></div>
<div class="t" style="right:521.5px;top:456px;font-size:12px;line-height:18px;color:#1c1c1c;"><span class="k" style="width:4.380em;transform:scaleX(0.730)">サブアイテム</span><span class="h" style="width:0.760em;transform:scaleX(0.760)">の</span>価格<span class="h" style="width:0.760em;transform:scaleX(0.760)">を</span>含<span class="h" style="width:1.520em;transform:scaleX(0.760)">める</span></div>
<div class="b" style="left:1226px;top:500px;width:672px;height:147.5px;border:1px solid #a0abb3;border-radius:4px"></div>
<div class="b" style="left:1426px;top:519px;width:14px;height:13px;border:1px solid #404040;background:#c2c2c2"></div>
<div class="b" style="left:1426px;top:539px;width:170px;height:23px;border:1px solid #66727e;border-top-color:#56677a;border-bottom-color:#8a97a4;background:#bfbfbf;box-shadow:inset 0 0 0 1px #b6bec6"></div>
<div class="t" style="left:1431px;top:542.8px;font-size:12px;line-height:18px;color:#a4a4a4;">日付<span class="h" style="width:0.760em;transform:scaleX(0.760)">の</span>選択</div>
<svg class="s" style="left:1570px;top:541.5px;" width="20" height="18" viewBox="0 0 20 18"><rect x="0.500" y="0.500" width="19" height="16.500" fill="#c8c8c8" stroke="#9a9a9a"/><rect x="1" y="1" width="18" height="3.300" fill="#a3b0bd"/><circle cx="10" cy="2.600" r="0.900" fill="#e0e0e0"/><text x="10" y="15.300" font-size="10.500" fill="#929292" text-anchor="middle" font-family="Liberation Sans, sans-serif" letter-spacing="0.500">15</text></svg>
<div class="b" style="left:1426px;top:564px;width:170px;height:23px;border:1px solid #66727e;border-top-color:#56677a;border-bottom-color:#8a97a4;background:#bfbfbf;box-shadow:inset 0 0 0 1px #b6bec6"></div>
<div class="t" style="left:1431px;top:567.8px;font-size:12px;line-height:18px;color:#a4a4a4;">日付<span class="h" style="width:0.760em;transform:scaleX(0.760)">の</span>選択</div>
<svg class="s" style="left:1570px;top:566.5px;" width="20" height="18" viewBox="0 0 20 18"><rect x="0.500" y="0.500" width="19" height="16.500" fill="#c8c8c8" stroke="#9a9a9a"/><rect x="1" y="1" width="18" height="3.300" fill="#a3b0bd"/><circle cx="10" cy="2.600" r="0.900" fill="#e0e0e0"/><text x="10" y="15.300" font-size="10.500" fill="#929292" text-anchor="middle" font-family="Liberation Sans, sans-serif" letter-spacing="0.500">15</text></svg>
<div class="b" style="left:1426px;top:589px;width:170px;height:23px;border:1px solid #7d7f84;background:#c1c1c1;border-color:#9c9c9c"></div>
<div class="b" style="left:1426px;top:614px;width:170px;height:23px;border:1px solid #7d7f84;background:#c1c1c1;border-color:#9c9c9c"></div>
<div class="b" style="left:1690px;top:1015px;width:100px;height:20px;border:1px solid #4a4a4a;background:#a8a8a8"></div>
<div class="t" style="left:1540px;width:400px;text-align:center;top:1017.5px;font-size:12px;line-height:18px;color:#1c1c1c;">更<span class="h" style="width:0.880em;transform:scaleX(0.880)">に</span><span style="letter-spacing:-0.900px">...</span></div>
<div class="b" style="left:1801px;top:1015px;width:97px;height:20px;background:#a7a7a7"></div>
<div class="t" style="left:1650px;width:400px;text-align:center;top:1017.8px;font-size:12px;line-height:18px;color:#1c1c1c;">生成<span class="h" style="width:1.760em;transform:scaleX(0.880)">する</span></div>
<div class="b" style="left:817px;top:376px;width:551px;height:404.5px;background:#f5f5f5;border:1px solid #5a5a5a;box-shadow:0 4px 16px rgba(0,0,0,.42),0 0 4px rgba(0,0,0,.30)"></div>
<div class="b" style="left:818px;top:377px;width:549px;height:30px;background:#ffffff"></div>
<svg class="s" style="left:826px;top:383px;" width="17" height="17" viewBox="0 0 17 17"><rect x="4" y="4" width="12" height="12" fill="#8a8281"/><rect x="0" y="0" width="12" height="11.700" fill="#e0492b"/><path d="M4 11.500C3.500 7 7 4 11.900 4.200C12.200 9 9 12 4 11.500Z" fill="#7c2a1a"/></svg>
<div class="t" style="left:847px;top:382.5px;font-size:12px;line-height:18px;color:#000;">部屋機能を選択する</div>
<svg class="s" style="left:1247px;top:385px;" width="105" height="12" viewBox="0 0 105 12"><path d="M1.300 6.500H11" stroke="#000" stroke-width="1.100"/><rect x="46.500" y="1.700" width="9" height="9" fill="none" stroke="#000" stroke-width="1.200"/><path d="M92.300 1.300L102 11M102 1.300L92.300 11" stroke="#000" stroke-width="1.200"/></svg>
<div class="b" style="left:862px;top:414px;width:58px;height:21px;border:1px solid #d2d2d2;background:#f0f0f0"></div>
<div class="t" style="left:867px;top:416px;font-size:12px;line-height:18px;color:#000;;transform:scaleX(0.96);transform-origin:left center">検索 (F3)</div>
<div class="b" style="left:823px;top:434px;width:247px;height:310.5px;border:1px solid #a0a0a0;background:#fff"></div>
<div class="b" style="left:823px;top:412px;width:40px;height:23px;border:1px solid #c8c8c8;border-bottom:none;background:#fff"></div>
<div class="t" style="left:831px;top:414.5px;font-size:12px;line-height:18px;color:#000;;transform:scaleX(0.94);transform-origin:left center">選択</div>
<svg class="s" style="left:833.3px;top:447.5px;" width="7" height="7" viewBox="0 0 7 7"><path d="M6.500 0.300V6.500H0.300Z" fill="#454545"/></svg>
<div class="t" style="left:849px;top:441.5px;font-size:12px;line-height:18px;color:#000;"><b>体験版</b><span style="color:#c9b9c9;font-weight:normal;margin:0 4px 0 5px">|</span><b><span class="k" style="width:4.470em;transform:scaleX(0.745)">データベース</span></b></div>
<svg class="s" style="left:852.6px;top:465.7px;" width="7" height="7" viewBox="0 0 7 7"><path d="M6.500 0.300V6.500H0.300Z" fill="#454545"/></svg>
<div class="b" style="left:865px;top:460.5px;width:70px;height:18px;background:linear-gradient(#d4ecfc,#c3e4fb);border:1px solid #86b4e4;border-radius:2.500px"></div>
<div class="t" style="left:867.7px;top:461px;font-size:12px;line-height:18px;color:#000;;transform:scaleX(0.985);transform-origin:left center">A - 建築物 A</div>
<svg class="s" style="left:873.5px;top:484px;" width="6" height="9" viewBox="0 0 6 9"><path d="M0.500 0.500L5 4.500L0.500 8.500Z" fill="none" stroke="#9a9a9a" stroke-width="1"/></svg>
<div class="t" style="left:886.5px;top:479.8px;font-size:12px;line-height:18px;color:#000;;transform:scaleX(0.975);transform-origin:left center">A.00 - 0階</div>
<svg class="s" style="left:873.5px;top:503px;" width="6" height="9" viewBox="0 0 6 9"><path d="M0.500 0.500L5 4.500L0.500 8.500Z" fill="none" stroke="#9a9a9a" stroke-width="1"/></svg>
<div class="t" style="left:886.5px;top:498.8px;font-size:12px;line-height:18px;color:#000;;transform:scaleX(0.975);transform-origin:left center">A.01 - 1階</div>
<svg class="s" style="left:873.5px;top:522px;" width="6" height="9" viewBox="0 0 6 9"><path d="M0.500 0.500L5 4.500L0.500 8.500Z" fill="none" stroke="#9a9a9a" stroke-width="1"/></svg>
<div class="t" style="left:886.5px;top:517.8px;font-size:12px;line-height:18px;color:#000;;transform:scaleX(0.975);transform-origin:left center">A.02 - 2階</div>
<svg class="s" style="left:873.5px;top:541px;" width="6" height="9" viewBox="0 0 6 9"><path d="M0.500 0.500L5 4.500L0.500 8.500Z" fill="none" stroke="#9a9a9a" stroke-width="1"/></svg>
<div class="t" style="left:886.5px;top:536.8px;font-size:12px;line-height:18px;color:#000;;transform:scaleX(0.975);transform-origin:left center">A.03 - 3階</div>
<svg class="s" style="left:873.5px;top:560px;" width="6" height="9" viewBox="0 0 6 9"><path d="M0.500 0.500L5 4.500L0.500 8.500Z" fill="none" stroke="#9a9a9a" stroke-width="1"/></svg>
<div class="t" style="left:886.5px;top:555.8px;font-size:12px;line-height:18px;color:#000;;transform:scaleX(0.975);transform-origin:left center">A.04 - 4愛</div>
<svg class="s" style="left:873.5px;top:579px;" width="6" height="9" viewBox="0 0 6 9"><path d="M0.500 0.500L5 4.500L0.500 8.500Z" fill="none" stroke="#9a9a9a" stroke-width="1"/></svg>
<div class="t" style="left:886.5px;top:574.8px;font-size:12px;line-height:18px;color:#000;;transform:scaleX(0.975);transform-origin:left center">A.05 - 5階</div>
<svg class="s" style="left:873.5px;top:598px;" width="6" height="9" viewBox="0 0 6 9"><path d="M0.500 0.500L5 4.500L0.500 8.500Z" fill="none" stroke="#9a9a9a" stroke-width="1"/></svg>
<div class="t" style="left:886.5px;top:593.8px;font-size:12px;line-height:18px;color:#000;;transform:scaleX(0.975);transform-origin:left center">A.06 - 6階</div>
<svg class="s" style="left:873.5px;top:617px;" width="6" height="9" viewBox="0 0 6 9"><path d="M0.500 0.500L5 4.500L0.500 8.500Z" fill="none" stroke="#9a9a9a" stroke-width="1"/></svg>
<div class="t" style="left:886.5px;top:612.8px;font-size:12px;line-height:18px;color:#000;;transform:scaleX(0.975);transform-origin:left center">A.08 - 8階</div>
<svg class="s" style="left:873.5px;top:636px;" width="6" height="9" viewBox="0 0 6 9"><path d="M0.500 0.500L5 4.500L0.500 8.500Z" fill="none" stroke="#9a9a9a" stroke-width="1"/></svg>
<div class="t" style="left:886.5px;top:631.8px;font-size:12px;line-height:18px;color:#000;;transform:scaleX(0.975);transform-origin:left center">A.09 - 9階</div>
<svg class="s" style="left:873.5px;top:655px;" width="6" height="9" viewBox="0 0 6 9"><path d="M0.500 0.500L5 4.500L0.500 8.500Z" fill="none" stroke="#9a9a9a" stroke-width="1"/></svg>
<div class="t" style="left:886.5px;top:650.8px;font-size:12px;line-height:18px;color:#000;;transform:scaleX(0.975);transform-origin:left center">A.10 - 10階</div>
<div class="b" style="left:1082px;top:539px;width:21px;height:20px;border:1px solid #666;background:#dedede;box-shadow:inset 0 0 0 0.500px #777"></div>
<div class="t" style="left:892.5px;width:400px;text-align:center;top:541.3px;font-size:11px;line-height:16px;color:#000;letter-spacing:2px;text-indent:2px">&gt;</div>
<div class="b" style="left:1082px;top:569px;width:21px;height:20px;border:1px solid #b9c0c4;background:#f6f6f6"></div>
<div class="t" style="left:892.5px;width:400px;text-align:center;top:571.3px;font-size:11px;line-height:16px;color:#a0a0a0;letter-spacing:2px;text-indent:2px">&lt;</div>
<div class="b" style="left:1082px;top:599px;width:21px;height:19px;border:1px solid #666;background:#dedede;box-shadow:inset 0 0 0 0.500px #777"></div>
<div class="t" style="left:892.5px;width:400px;text-align:center;top:600.8px;font-size:11px;line-height:16px;color:#000;letter-spacing:2px;text-indent:2px">&lt;&lt;</div>
<div class="b" style="left:1113px;top:434px;width:249px;height:310.5px;border:1px solid #a0a0a0;background:#fff"></div>
<div class="b" style="left:1113px;top:412px;width:52px;height:23px;border:1px solid #c8c8c8;border-bottom:none;background:#fff"></div>
<div class="t" style="left:1121px;top:414.5px;font-size:12px;line-height:18px;color:#000;;transform:scaleX(0.92);transform-origin:left center">選択：</div>
<div class="b" style="left:1114px;top:435px;width:247px;height:20px;background:linear-gradient(#fff 55%,#f4f4f4)"></div>
<div class="t" style="left:1119.5px;top:437px;font-size:12px;line-height:18px;color:#000;;transform:scaleX(0.96);transform-origin:left center">定数</div>
<div class="t" style="left:1219.5px;top:437px;font-size:12px;line-height:18px;color:#000;;transform:scaleX(0.96);transform-origin:left center">名前</div>
<div class="b" style="left:1215px;top:436px;width:1px;height:19px;background:#dedede"></div>
<div class="b" style="left:1315px;top:436px;width:1px;height:19px;background:#dedede"></div>
<div class="b" style="left:1116px;top:455px;width:243px;height:1px;background:#d5d5d5"></div>
<div class="t" style="left:1121.3px;top:457px;font-size:12px;line-height:18px;color:#000;;transform:scaleX(0.96);transform-origin:left center">A.07</div>
<div class="t" style="left:1221.3px;top:457px;font-size:12px;line-height:18px;color:#000;;transform:scaleX(0.96);transform-origin:left center">7階</div>
<div class="b" style="left:1114px;top:721px;width:247px;height:22.5px;background:#f5f5f5"></div>
<svg class="s" style="left:1343px;top:725px;" width="16" height="15" viewBox="0 0 16 15"><rect x="1.300" y="3.800" width="3.700" height="10.400" fill="#fff" stroke="#c2c2c2" stroke-width="0.900"/><rect x="10.800" y="3.800" width="3.700" height="10.400" fill="#fff" stroke="#c2c2c2" stroke-width="0.900"/><rect x="6" y="1" width="3.800" height="11" fill="#e34a22"/></svg>
<div class="b" style="left:1191px;top:754px;width:80px;height:21px;background:linear-gradient(#0b7fb4 0,#0e98d6 22%,#10a0de 60%,#0d98d6 100%);box-shadow:inset 1px 0 2px #0a74a6,inset -1px 0 2px #0a74a6"></div>
<div class="t" style="left:1031.5px;width:400px;text-align:center;top:756.5px;font-size:12px;line-height:18px;color:#fff;"><span class="h" style="width:1.700em;transform:scaleX(0.850)">はい</span></div>
<div class="b" style="left:1282px;top:755px;width:80px;height:20px;border:1px solid #707070;background:#dedede"></div>
<div class="t" style="left:1121.5px;width:400px;text-align:center;top:756.5px;font-size:12px;line-height:18px;color:#000;"><span class="k" style="width:3.900em;transform:scaleX(0.780)">キャンセル</span></div>
<div class="b" style="left:1189px;top:752px;width:84px;height:25px;border:3px solid #ff4343;box-shadow:1px 2px 4px rgba(0,0,0,.35)"></div>
<div class="b" style="left:1799px;top:1013px;width:101px;height:23px;border:3px solid #ff4343;box-shadow:1px 2px 4px rgba(0,0,0,.35),inset 0 1px 3px 1px rgba(0,0,0,.30)"></div>
<div class="b" style="left:1140px;top:744px;width:40px;height:40px;border-radius:50%;background:#ff4343;box-shadow:1px 3px 6px rgba(0,0,0,.4)"></div>
<div class="t" style="left:1139.5px;top:744.5px;width:40px;text-align:center;font-family:NanumGothic,'Liberation Sans',sans-serif;font-size:29px;line-height:40px;color:#fff;-webkit-text-stroke:0.9px #fff">1</div>
<div class="b" style="left:1830px;top:964px;width:40px;height:40px;border-radius:50%;background:#ff4343;box-shadow:1px 3px 6px rgba(0,0,0,.4)"></div>
<div class="t" style="left:1830px;top:964.5px;width:40px;text-align:center;font-family:NanumGothic,'Liberation Sans',sans-serif;font-size:29px;line-height:40px;color:#fff;-webkit-text-stroke:0.9px #fff">2</div>
</body></html>
